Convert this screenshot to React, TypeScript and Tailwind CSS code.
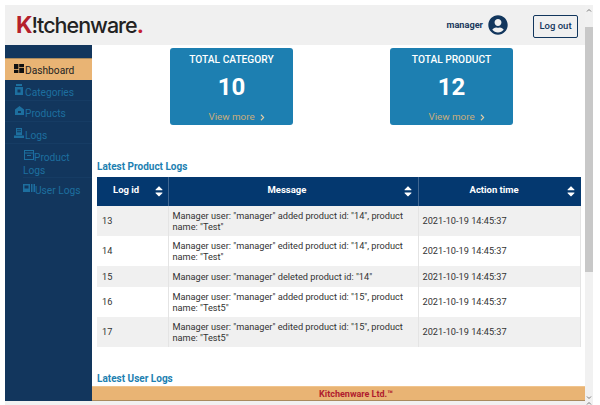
import React from "react";
import { FaCaretUp, FaCaretDown, FaChevronRight, FaUserCircle } from "react-icons/fa";

const rows = [
  { id: 13, msg: ['Manager user: "manager" added product id: "14", product', 'name: "Test"'], h: "h-[30px]" },
  { id: 14, msg: ['Manager user: "manager" edited product id: "14", product', 'name: "Test"'], h: "h-[30px]" },
  { id: 15, msg: ['Manager user: "manager" deleted product id: "14"'], h: "h-[21px]" },
  { id: 16, msg: ['Manager user: "manager" added product id: "15", product', 'name: "Test5"'], h: "h-[30px]" },
  { id: 17, msg: ['Manager user: "manager" edited product id: "15", product', 'name: "Test5"'], h: "h-[30px]" },
];

const SortIcon = () => (
  <span className="flex flex-col items-center text-white text-[12px] leading-none">
    <FaCaretUp className="-mb-[6px]" />
    <FaCaretDown />
  </span>
);

const StatCard = ({ title, value }: { title: string; value: number }) => (
  <div className="w-[123px] h-[77px] bg-[#1d7fb1] rounded-[3px] flex flex-col items-center text-white">
    <div className="mt-[5px] text-[10.2px] leading-[14px] font-medium">{title}</div>
    <div className="mt-[6px] text-[24px] leading-[28px] font-bold">{value}</div>
    <div className="mt-[9px] ml-[11px] flex items-center gap-[4px] text-[9.8px] leading-[14px] text-[#c9ad7c]">
      View more <FaChevronRight className="text-[7px] text-[#e3cda6]" />
    </div>
  </div>
);

const GridIcon = () => (
  <svg viewBox="0 0 10 9" className="w-[10px] h-[9px] mt-[5px] mr-[1px] fill-[#111]">
    <rect x="0" y="0" width="4.4" height="5" />
    <rect x="5.2" y="0" width="4.8" height="3" />
    <rect x="0" y="5.8" width="4.4" height="3.2" />
    <rect x="5.2" y="3.8" width="4.8" height="5.2" />
  </svg>
);

const JarIcon = () => (
  <svg viewBox="0 0 8 11" className="w-[8px] h-[11px] mt-[4px] ml-[1px] mr-[2px] fill-[#1d6f9f]">
    <rect x="1" y="0" width="6" height="2" />
    <path d="M0 3h8v8H0z M2.5 5.5v3h3v-3z" fillRule="evenodd" />
  </svg>
);

const BoxIcon = () => (
  <svg viewBox="0 0 9 9" className="w-[9px] h-[9px] mt-[5px] ml-[1px] mr-[1px] fill-[#1d6f9f]">
    <path d="M0 3.5 4.5 0 9 3.5V9H0z M3 5v2h3V5z" fillRule="evenodd" />
  </svg>
);

const LogIcon = () => (
  <svg viewBox="0 0 10 10" className="w-[10px] h-[10px] mt-[6px] mr-[1px] fill-[#1d6f9f]">
    <path d="M2 0h6v7H2z M3 1.2v1h4v-1z M3 3.2v1h4v-1z" fillRule="evenodd" />
    <rect x="0" y="7.5" width="10" height="2.5" />
  </svg>
);

const ArchiveIcon = () => (
  <svg viewBox="0 0 10 10" className="inline-block align-top w-[10px] h-[10px] mt-[-1px] ml-[1px] fill-none stroke-[#1d6f9f]">
    <rect x="0.5" y="0.5" width="9" height="9" />
    <path d="M0.5 3h9 M3 5.5h4" />
  </svg>
);

const KeysIcon = () => (
  <svg viewBox="0 0 12 8" className="inline-block align-top w-[12px] h-[8px] fill-[#1d6f9f]">
    <path d="M0 0h7v8H0z M1.5 1.5v3h4v-3z" fillRule="evenodd" />
    <rect x="8" y="0" width="1.5" height="8" />
    <rect x="10.5" y="0" width="1.5" height="8" />
  </svg>
);

const ScrollArrow = ({ up }: { up?: boolean }) => (
  <svg viewBox="0 0 8 4" className="w-[8px] h-[4px] fill-none stroke-[#777]">
    <path d={up ? "M2 3.5 4 1.5 6 3.5" : "M2 0.5 4 2.5 6 0.5"} />
  </svg>
);

export default function App() {
  return (
    <div className="w-[600px] h-[405px] overflow-hidden bg-white pt-[5px] pl-[5px] font-['Roboto',sans-serif]">
      <div className="w-[588px] h-[396px] flex">
        <div className="w-[580px] flex flex-col">
          <header className="h-[40px] bg-[#f0f0f0] flex items-center shrink-0">
            <div className="ml-[11px] text-[21.5px] leading-none font-['Inter',sans-serif] font-medium tracking-[-1px] text-[#222]">
              <span className="text-[#b5202c] font-bold text-[23px]">K</span>!tchenware<span className="text-[#c4202f] font-bold">.</span>
            </div>
            <div className="ml-auto flex items-center">
              <span className="text-[9.2px] font-bold text-[#1a3a5e]">manager</span>
              <FaUserCircle className="ml-[5px] text-[20px] text-[#12365d]" />
              <button className="ml-[25px] mr-[7px] mt-[2px] w-[45px] h-[23px] border border-[#12365d] rounded-[2px] text-[9.5px] font-medium text-[#12365d]">Log out</button>
            </div>
          </header>
          <div className="flex flex-1 min-h-0">
            <aside className="w-[87px] bg-[#12365d] shrink-0 pt-[13px] text-[10.2px] leading-[13px] text-[#1d6f9f]">
              <div className="h-[22px] bg-[#e9b474] border-t border-[#a98a5e] flex pl-[9px] pt-[5px] text-[#222]">
                <div className="-mt-[5px] flex"><GridIcon /></div><span>Dashboard</span>
              </div>
              <div className="h-[21px] flex pl-[9px] pt-[6px] border-b border-[#163c64]">
                <div className="-mt-[6px] flex"><JarIcon /></div><span>Categories</span>
              </div>
              <div className="h-[21px] flex pl-[9px] pt-[6px] border-b border-[#163c64]">
                <div className="-mt-[6px] flex"><BoxIcon /></div><span>Products</span>
              </div>
              <div className="h-[22px] flex pl-[9px] pt-[7px] border-b border-[#163c64]">
                <div className="-mt-[7px] flex"><LogIcon /></div><span>Logs</span>
              </div>
              <div className="ml-[18px] pt-[7px] h-[34px] border-b border-[#163c64]">
                <ArchiveIcon />Product<br />Logs
              </div>
              <div className="ml-[18px] pt-[6px]">
                <KeysIcon />User Logs
              </div>
            </aside>
            <main className="flex-1 min-w-0 overflow-hidden pl-[5px] pr-[4px] flex flex-col relative">
              <div className="flex justify-center gap-[97px] pt-[3px] pl-[5px]">
                <StatCard title="TOTAL CATEGORY" value={10} />
                <StatCard title="TOTAL PRODUCT" value={12} />
              </div>
              <h2 className="mt-[35px] text-[10px] leading-[14px] font-bold text-[#1d7fb1]">Latest Product Logs</h2>
              <table className="mt-[3px] w-[484px] table-fixed border-collapse text-[9.2px] text-[#333]">
                <thead>
                  <tr className="h-[29px] bg-[#04386f] text-white text-[9.5px]">
                    <th className="w-[71px] font-bold border-r border-[#3f6691]">
                      <div className="flex items-center justify-between pl-[16px] pr-[3px] -mt-[2px]"><span>Log id</span><SortIcon /></div>
                    </th>
                    <th className="w-[250px] font-bold border-r border-[#3f6691]">
                      <div className="flex items-center justify-between pl-[99px] pr-[4px] -mt-[2px]"><span>Message</span><SortIcon /></div>
                    </th>
                    <th className="font-bold">
                      <div className="flex items-center justify-between pl-[51px] pr-[4px] -mt-[2px]"><span>Action time</span><SortIcon /></div>
                    </th>
                  </tr>
                </thead>
                <tbody>
                  {rows.map((r, i) => (
                    <tr key={r.id} className={`${r.h} ${i % 2 === 0 ? "bg-[#f0f0f0]" : "bg-white"}`}>
                      <td className="pl-[5px] border-r border-[#e4e4e4]">{r.id}</td>
                      <td className="pl-[4px] pr-0 leading-[11px] border-r border-[#e4e4e4] whitespace-nowrap">
                        {r.msg.map((m) => <div key={m}>{m}</div>)}
                      </td>
                      <td className="pl-[4px] border-r border-[#e4e4e4]">2021-10-19 14:45:37</td>
                    </tr>
                  ))}
                </tbody>
              </table>
              <h2 className="mt-[25px] text-[10px] leading-[14px] font-bold text-[#1d7fb1]">Latest User Logs</h2>
              <footer className="absolute left-0 right-0 bottom-0 h-[15px] bg-[#e9b474] border-t border-[#f0c48d] border-b border-b-[#a98a5e] pl-[35px] text-center text-[9px] font-bold leading-[14px] text-[#b01c2e]">
                Kitchenware Ltd.™
              </footer>
            </main>
          </div>
        </div>
        <div className="w-[8px] bg-[#f1f1f1] flex flex-col justify-between">
          <div>
            <div className="h-[22px] pt-[3px]"><ScrollArrow up /></div>
            <div className="h-[245px] bg-[#c8c8c8]" />
          </div>
          <div className="pb-[1px]"><ScrollArrow /></div>
        </div>
      </div>
      <div className="w-[588px] h-[4px] bg-[#f1f1f1] flex justify-end">
        <ScrollArrow up />
      </div>
    </div>
  );
}
